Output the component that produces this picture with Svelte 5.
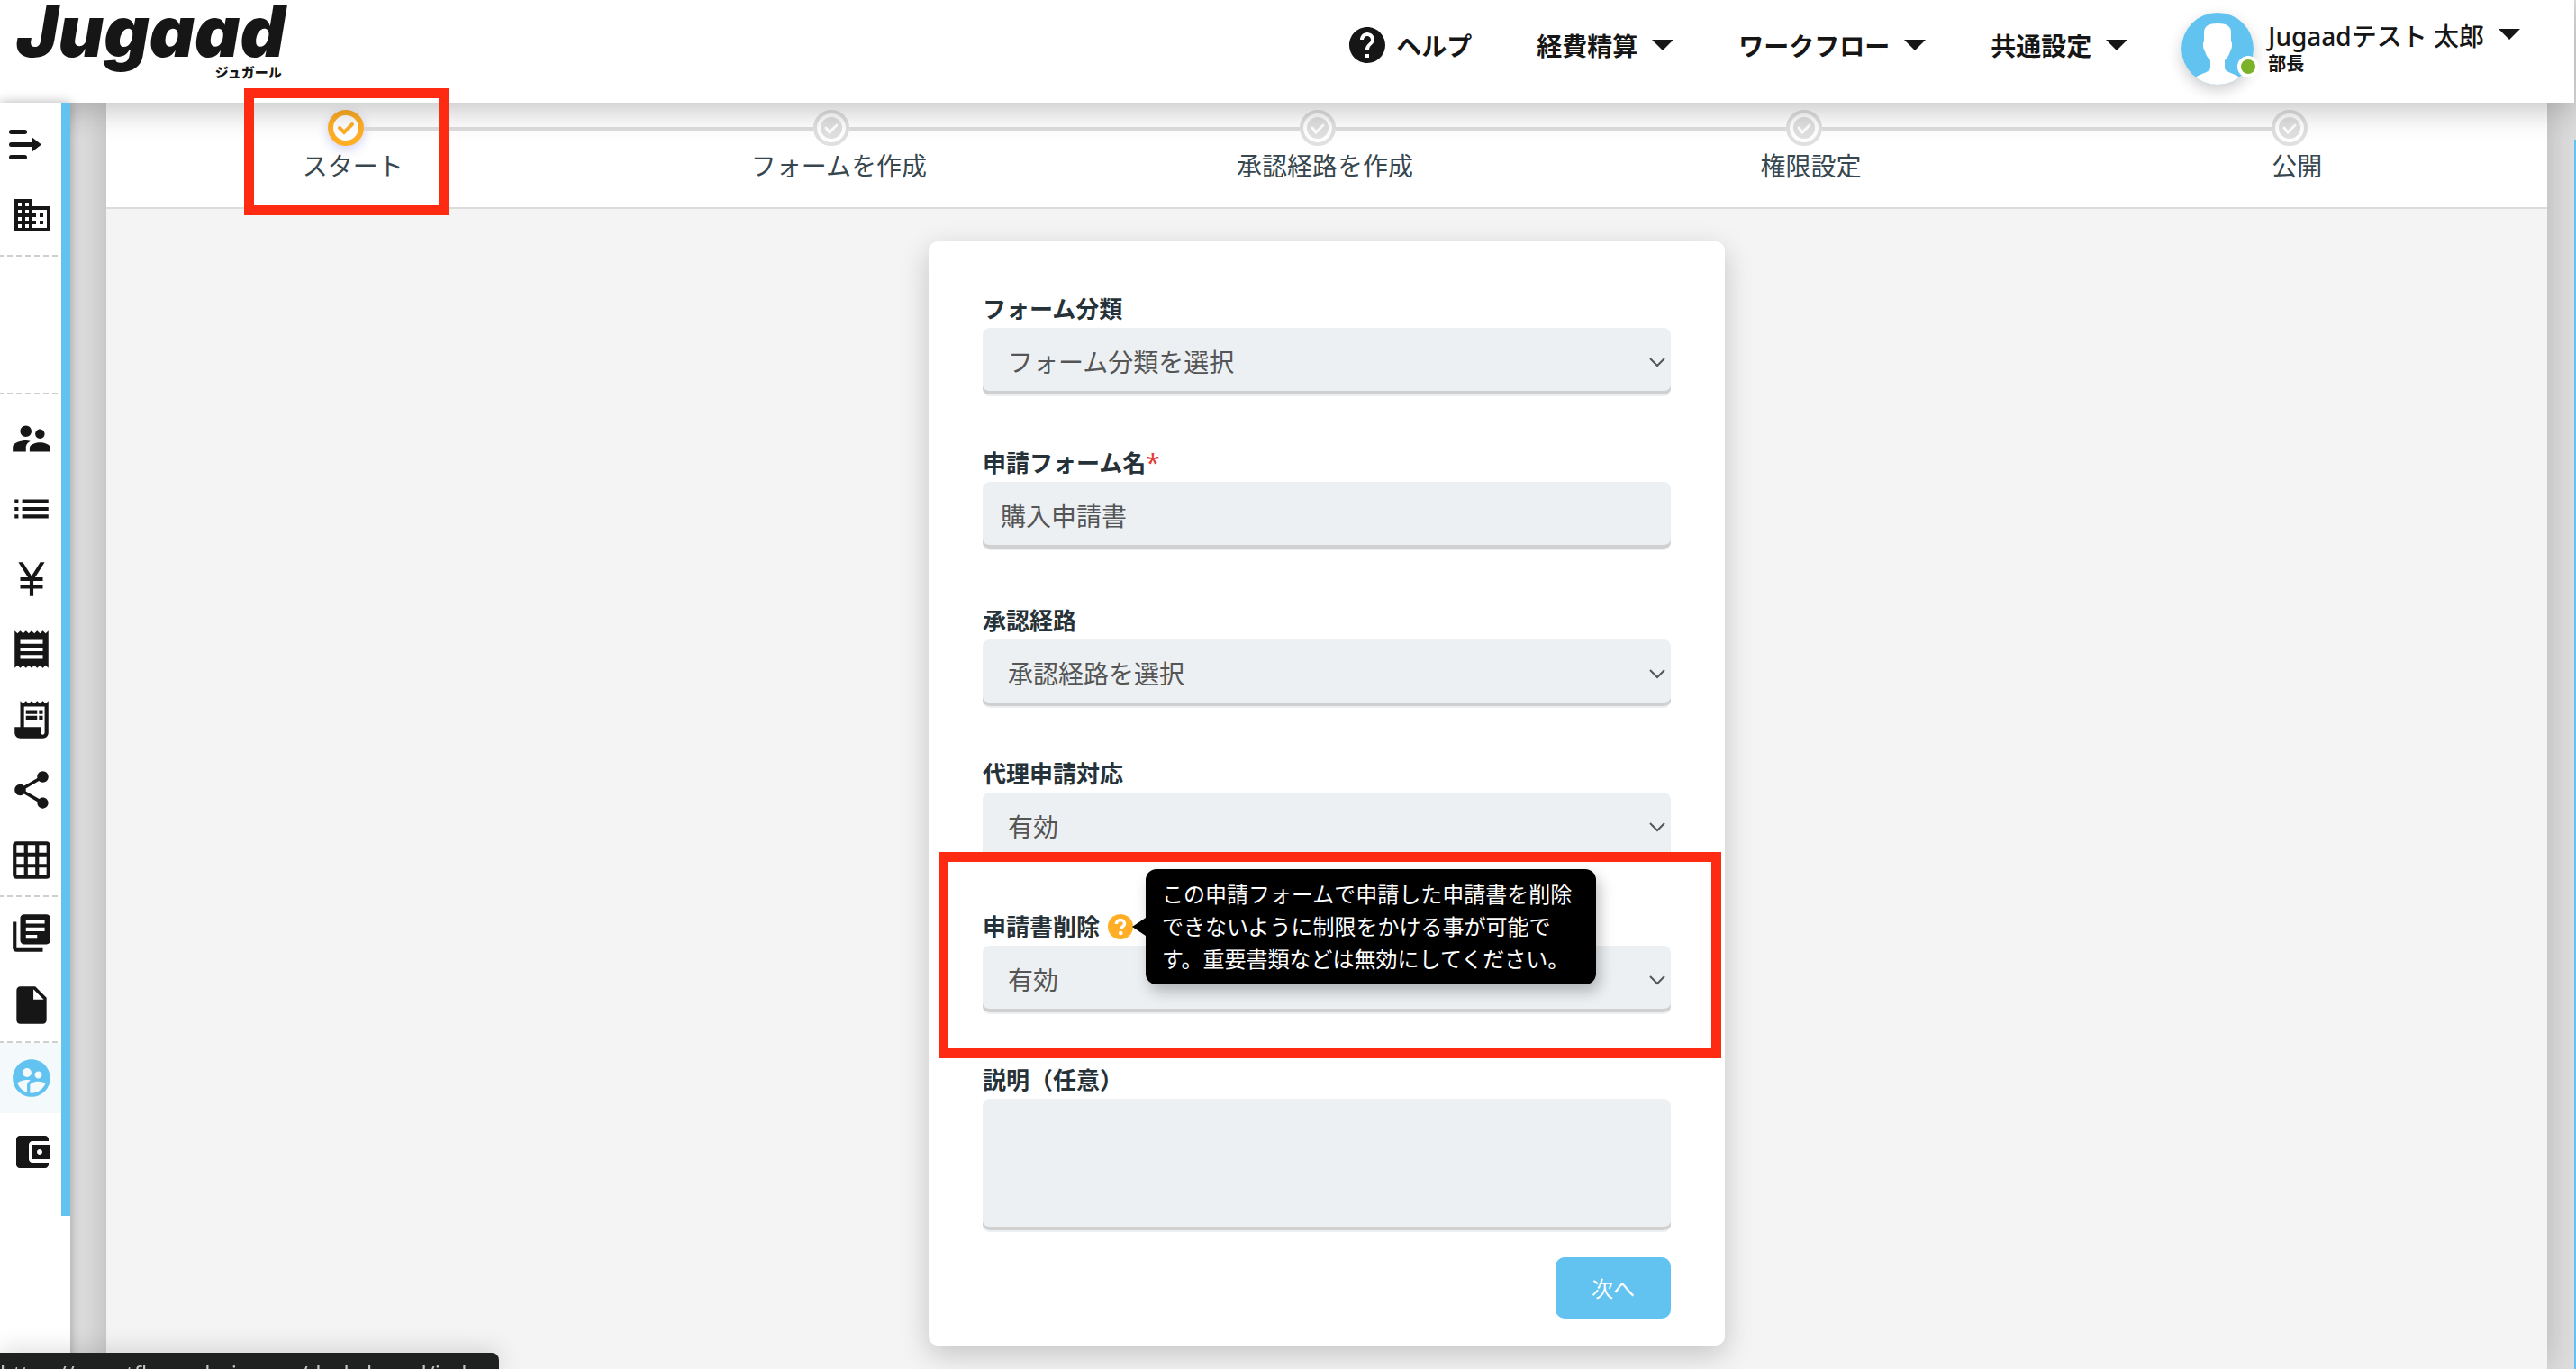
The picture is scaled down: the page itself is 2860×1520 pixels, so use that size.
<script lang="ts">
  interface Icon {
    label: string;
    path: string;
    size?: number;
    active?: boolean;
  }

  const menus = ['経費精算', 'ワークフロー', '共通設定'];
  const steps = ['スタート', 'フォームを作成', '承認経路を作成', '権限設定', '公開'];

  const company: Icon = {
    label: '会社',
    size: 48,
    path: 'M12 7V3H2v18h20V7H12zM6 19H4v-2h2v2zm0-4H4v-2h2v2zm0-4H4V9h2v2zm0-4H4V5h2v2zm4 12H8v-2h2v2zm0-4H8v-2h2v2zm0-4H8V9h2v2zm0-4H8V5h2v2zm10 12h-8v-2h2v-2h-2v-2h2v-2h-2V9h8v10zm-2-8h-2v2h2v-2zm0 4h-2v2h2v-2z',
  };

  const masters: Icon[] = [
    {
      label: 'ユーザー',
      path: 'M16.5 12c1.38 0 2.49-1.12 2.49-2.5S17.88 7 16.5 7C15.12 7 14 8.12 14 9.5s1.12 2.5 2.5 2.5zM9 11c1.66 0 2.99-1.34 2.99-3S10.66 5 9 5C7.34 5 6 6.34 6 8s1.34 3 3 3zm7.5 3c-1.83 0-5.5.92-5.5 2.75V19h11v-2.25c0-1.83-3.67-2.75-5.5-2.75zM9 13c-2.33 0-7 1.17-7 3.5V19h7v-2.25c0-.85.33-2.34 2.37-3.47C10.5 13.1 9.66 13 9 13z',
    },
    { label: '一覧', path: 'M3 13h2v-2H3v2zm0 4h2v-2H3v2zm0-8h2V7H3v2zm4 4h14v-2H7v2zm0 4h14v-2H7v2zM7 7v2h14V7H7z' },
    { label: '通貨', path: 'M13.92 11H18v2h-5v2h5v2h-5v4h-2v-4H6v-2h5v-2H6v-2h4.08L5 3h2.37L12 10.29 16.63 3H19l-5.08 8z' },
    {
      label: '領収書',
      path: 'M18 17H6v-2h12v2zm0-4H6v-2h12v2zm0-4H6V7h12v2zM3 22l1.5-1.5L6 22l1.5-1.5L9 22l1.5-1.5L12 22l1.5-1.5L15 22l1.5-1.5L18 22l1.5-1.5L21 22V2l-1.5 1.5L18 2l-1.5 1.5L15 2l-1.5 1.5L12 2l-1.5 1.5L9 2 7.5 3.5 6 2 4.5 3.5 3 2v20z',
    },
    {
      label: '明細',
      path: 'M19.5 3.5L18 2l-1.5 1.5L15 2l-1.5 1.5L12 2l-1.5 1.5L9 2 7.5 3.5 6 2v14H3v3c0 1.66 1.34 3 3 3h12c1.66 0 3-1.34 3-3V2l-1.5 1.5zM19 19c0 .55-.45 1-1 1s-1-.45-1-1v-3H8V5h11v14zM9 7h6v2H9zM16 7h2v2h-2zM9 10h6v2H9zM16 10h2v2h-2z',
    },
    {
      label: '共有',
      path: 'M18 16.08c-.76 0-1.44.3-1.96.77L8.91 12.7c.05-.23.09-.46.09-.7s-.04-.47-.09-.7l7.05-4.11c.54.5 1.25.81 2.04.81 1.66 0 3-1.34 3-3s-1.34-3-3-3-3 1.34-3 3c0 .24.04.47.09.7L8.04 9.81C7.5 9.31 6.79 9 6 9c-1.66 0-3 1.34-3 3s1.34 3 3 3c.79 0 1.5-.31 2.04-.81l7.12 4.16c-.05.21-.08.43-.08.65 0 1.61 1.31 2.92 2.92 2.92s2.92-1.31 2.92-2.92-1.31-2.92-2.92-2.92z',
    },
    {
      label: '表',
      path: 'M20 2H4c-1.1 0-2 .9-2 2v16c0 1.1.9 2 2 2h16c1.1 0 2-.9 2-2V4c0-1.1-.9-2-2-2zM8 20H4v-4h4v4zm0-6H4v-4h4v4zm0-6H4V4h4v4zm6 12h-4v-4h4v4zm0-6h-4v-4h4v4zm0-6h-4V4h4v4zm6 12h-4v-4h4v4zm0-6h-4v-4h4v4zm0-6h-4V4h4v4z',
    },
  ];

  const documents: Icon[] = [
    {
      label: '申請書',
      path: 'M4 6H2v14c0 1.1.9 2 2 2h14v-2H4V6zm16-4H8c-1.1 0-2 .9-2 2v12c0 1.1.9 2 2 2h12c1.1 0 2-.9 2-2V4c0-1.1-.9-2-2-2zm-1 9H9V9h10v2zm-4 4H9v-2h6v2zm4-8H9V5h10v2z',
    },
    { label: 'ファイル', path: 'M6 2c-1.1 0-1.99.9-1.99 2L4 20c0 1.1.89 2 1.99 2H18c1.1 0 2-.9 2-2V8l-6-6H6zm7 7V3.5L18.5 9H13z' },
  ];

  const flows: Icon[] = [
    {
      label: 'ワークフロー',
      active: true,
      path: 'M11.99 2c-5.52 0-10 4.48-10 10s4.48 10 10 10 10-4.48 10-10-4.48-10-10-10zm3.61 6.34c1.07 0 1.93.86 1.93 1.93 0 1.07-.86 1.93-1.93 1.93-1.07 0-1.93-.86-1.93-1.93-.01-1.07.86-1.93 1.93-1.93zm-6-1.58c1.3 0 2.36 1.06 2.36 2.36 0 1.3-1.06 2.36-2.36 2.36s-2.36-1.06-2.36-2.36c0-1.31 1.05-2.36 2.36-2.36zm0 9.13v3.75c-2.4-.75-4.3-2.6-5.14-4.96 1.05-1.12 3.67-1.69 5.14-1.69.53 0 1.2.08 1.9.22-1.64.87-1.9 2.02-1.9 2.68zM11.99 20c-.27 0-.53-.01-.79-.04v-4.07c0-1.42 2.94-2.13 4.4-2.13 1.07 0 2.92.39 3.84 1.15-1.17 2.97-4.06 5.09-7.45 5.09z',
    },
    {
      label: 'ウォレット',
      size: 48,
      path: 'M21 18v1c0 1.1-.9 2-2 2H5c-1.11 0-2-.9-2-2V5c0-1.1.89-2 2-2h14c1.1 0 2 .9 2 2v1h-9c-1.11 0-2 .9-2 2v8c0 1.1.89 2 2 2h9zm-9-2h10V8H12v8zm4-2.5c-.83 0-1.5-.67-1.5-1.5s.67-1.5 1.5-1.5 1.5.67 1.5 1.5-.67 1.5-1.5 1.5z',
    },
  ];

  let formName = $state('購入申請書');
</script>

{#snippet navIcon(icon: Icon)}
  <a class="nav-item" class:active={icon.active} class:offset={icon.size === 48} href="#top" aria-label={icon.label}>
    <svg width={icon.size ?? 50} height={icon.size ?? 50} viewBox="0 0 24 24" fill="currentColor">
      <path fill-rule="evenodd" d={icon.path} />
    </svg>
  </a>
{/snippet}

{#snippet caret()}
  <svg class="caret" width="24" height="12" viewBox="0 0 24 12" fill="currentColor"><path d="M0 0h24L12 12z" /></svg>
{/snippet}

{#snippet selectBox(id: string, value: string)}
  <div class="select-wrap">
    <select {id} class="control">
      <option>{value}</option>
    </select>
    <svg class="chevron" width="18" height="11" viewBox="0 0 18 11" fill="none" stroke="#555" stroke-width="2">
      <path d="M1 1l8 8 8-8" />
    </svg>
  </div>
{/snippet}

<div class="app">
  <div class="page">
    <header>
      <a class="logo" href="#top">
        <span class="logo-name">Jugaad</span>
        <span class="logo-kana">ジュガール</span>
      </a>
      <nav class="menus">
        <a class="menu help" href="#help">
          <svg width="48" height="48" viewBox="0 0 24 24" fill="currentColor">
            <path d="M12 2C6.48 2 2 6.48 2 12s4.48 10 10 10 10-4.48 10-10S17.52 2 12 2zm1 17h-2v-2h2v2zm2.07-7.75l-.9.92C13.45 12.9 13 13.5 13 15h-2v-.5c0-1.1.45-2.1 1.17-2.83l1.24-1.26c.37-.36.59-.86.59-1.41 0-1.1-.9-2-2-2s-2 .9-2 2H8c0-2.21 1.79-4 4-4s4 1.79 4 4c0 .88-.36 1.68-.93 2.25z" />
          </svg>
          ヘルプ
        </a>
        {#each menus as menu}
          <button class="menu">{menu}{@render caret()}</button>
        {/each}
      </nav>
      <button class="user">
        <span class="avatar">
          <svg width="80" height="80" viewBox="0 0 80 80">
            <clipPath id="face"><circle cx="40" cy="40" r="40" /></clipPath>
            <g clip-path="url(#face)">
              <rect width="80" height="80" fill="#62c3f0" />
              <path
                fill="#fff"
                d="M40 12c10 0 15 3 15 10v10c2 1 1 9-1 11-1 4-3 7-6 10v8c0 4 5 5 9 7 5 2 9 4 12 8v12H11V76c3-4 7-6 12-8 4-2 9-3 9-7v-8c-3-3-5-6-6-10-2-2-3-10-1-11V22c0-7 5-10 15-10z"
              />
            </g>
          </svg>
          <span class="online"></span>
        </span>
        <span class="who">
          <span class="name">Jugaadテスト 太郎{@render caret()}</span>
          <span class="role">部長</span>
        </span>
      </button>
    </header>

    <div class="body">
      <aside>
        <nav class="side">
          <div class="group top">
            <button class="nav-item toggle" aria-label="メニューを開く">
              <svg width="36" height="34" viewBox="0 0 36 34" fill="#161616">
                <rect width="20" height="5" y="0" rx="2.5" />
                <rect width="28" height="5" y="14" rx="2.5" />
                <rect width="20" height="5" y="28" rx="2.5" />
                <path d="M25 8l11 8.5L25 25z" />
              </svg>
            </button>
            {@render navIcon(company)}
          </div>
          <div class="group blank"></div>
          <div class="group masters">
            {#each masters as icon}{@render navIcon(icon)}{/each}
          </div>
          <div class="group documents">
            {#each documents as icon}{@render navIcon(icon)}{/each}
          </div>
          <div class="group flows">
            {#each flows as icon}{@render navIcon(icon)}{/each}
          </div>
        </nav>
      </aside>

      <main>
        <ol class="stepper">
          {#each steps as step, i}
            <li class:current={i === 0}>
              <span class="marker">
                <svg width="40" height="40" viewBox="0 0 40 40" fill="none">
                  {#if i === 0}
                    <circle cx="20" cy="20" r="17" fill="#fff" stroke="#ffae26" stroke-width="6" />
                    <path d="M13 20l5 5 9-9" stroke="#ffae26" stroke-width="4" stroke-linecap="round" />
                  {:else}
                    <circle cx="20" cy="20" r="18" fill="#fff" stroke="#e0e0e0" stroke-width="4" />
                    <circle cx="20" cy="20" r="12" fill="#e0e0e0" />
                    <path d="M14 20l4 5 8-8" stroke="#fff" stroke-width="3" stroke-linecap="round" />
                  {/if}
                </svg>
                {#if i === 0}<span class="highlight step-highlight"></span>{/if}
              </span>
              <span class="step-label">{step}</span>
            </li>
          {/each}
        </ol>

        <form class="card">
          <div class="field">
            <label for="category">フォーム分類</label>
            {@render selectBox('category', 'フォーム分類を選択')}
          </div>
          <div class="field spaced">
            <label for="form-name">申請フォーム名<span class="required">*</span></label>
            <input id="form-name" class="control" type="text" bind:value={formName} />
          </div>
          <div class="field">
            <label for="route">承認経路</label>
            {@render selectBox('route', '承認経路を選択')}
          </div>
          <div class="field">
            <label for="proxy">代理申請対応</label>
            {@render selectBox('proxy', '有効')}
          </div>
          <div class="field">
            <div class="label-row">
              <label for="deletion">申請書削除</label>
              <span class="hint">
                <svg width="28" height="28" viewBox="0 0 28 28" fill="none">
                  <circle cx="14" cy="14" r="14" fill="#ffae26" />
                  <path d="M9.5 11c0-2.5 2-4.5 4.5-4.5s4.5 1.8 4.5 4.2c0 3-4 3.300-4 6" stroke="#fff" stroke-width="3.5" />
                  <circle cx="14.3" cy="21" r="2.3" fill="#fff" />
                </svg>
                <span class="tooltip" role="tooltip">この申請フォームで申請した申請書を削除できないように制限をかける事が可能です。重要書類などは無効にしてください。</span>
              </span>
            </div>
            {@render selectBox('deletion', '有効')}
            <span class="highlight field-highlight"></span>
          </div>
          <div class="field">
            <label for="note">説明（任意）</label>
            <textarea id="note" class="control"></textarea>
          </div>
          <div class="actions">
            <button type="button" class="next">次へ</button>
          </div>
        </form>
      </main>
    </div>
  </div>
  <div class="rail"></div>
  <div class="status">https://smartflow.vebuin.com/dash_board/index</div>
</div>

<style>
  :global(body) {
    margin: 0;
    background: #dfdfdf;
  }
  .app,
  .app * {
    box-sizing: border-box;
  }
  .app {
    display: flex;
    min-height: 100vh;
    font-family: 'Noto Sans', 'Noto Sans CJK JP', sans-serif;
    font-size: 28px;
    color: #161616;
  }
  button,
  input,
  select,
  textarea {
    font: inherit;
    color: inherit;
  }
  button {
    padding: 0;
    border: 0;
    background: none;
    cursor: pointer;
  }
  a {
    color: inherit;
    text-decoration: none;
  }
  svg {
    display: block;
    flex: none;
  }
  .page {
    flex: 1;
    min-width: 0;
    display: flex;
    flex-direction: column;
  }
  .rail {
    width: 2px;
    margin-top: 155px;
    background: #62c3f0;
  }

  /* header */
  header {
    position: relative;
    z-index: 10;
    display: flex;
    align-items: flex-start;
    height: 114px;
    padding: 0 60px 0 18px;
    background: #fff;
    box-shadow: 0 8px 32px rgba(0, 0, 0, 0.24);
  }
  .logo {
    display: flex;
    flex-direction: column;
    margin-right: auto;
  }
  .logo-name {
    font: italic 900 78px/70px Inter, sans-serif;
  }
  .logo-kana {
    align-self: flex-end;
    margin-right: 4px;
    font-size: 15px;
    font-weight: 900;
    line-height: 20px;
  }
  .menus {
    display: flex;
    gap: 72px;
    height: 100px;
  }
  .menu {
    display: flex;
    align-items: center;
    gap: 16px;
    font-weight: 700;
    white-space: nowrap;
  }
  .help {
    gap: 8px;
  }
  .user {
    display: flex;
    gap: 16px;
    margin: 14px 0 0 60px;
    text-align: left;
  }
  .avatar {
    position: relative;
    border-radius: 50%;
    box-shadow: 0 6px 16px rgba(0, 0, 0, 0.2);
  }
  .online {
    position: absolute;
    right: -6px;
    bottom: 8px;
    width: 24px;
    height: 24px;
    border: 4px solid #fff;
    border-radius: 50%;
    background: #7cb22a;
  }
  .who {
    display: flex;
    flex-direction: column;
    padding-top: 8px;
  }
  .name {
    display: flex;
    gap: 16px;
    font-weight: 500;
    line-height: 36px;
    white-space: nowrap;
  }
  .name .caret {
    margin-top: 10px;
  }
  .role {
    font-size: 20px;
    font-weight: 700;
    line-height: 26px;
  }

  /* sidebar */
  .body {
    flex: 1;
    display: flex;
  }
  aside {
    position: relative;
    z-index: 11;
    flex: none;
    width: 78px;
    margin-right: 40px;
    background: #fff;
    box-shadow: 0 0 12px rgba(0, 0, 0, 0.3);
  }
  .side {
    padding-bottom: 32px;
    border-right: 10px solid #62c3f0;
  }
  .group + .group::before {
    content: '';
    display: block;
    width: 65px;
    height: 2px;
    background: repeating-linear-gradient(90deg, #cfcfcf 0 4px, transparent 4px 8px, #cfcfcf 8px 10px);
  }
  .top {
    padding: 8px 0 5px;
  }
  .blank {
    height: 153px;
  }
  .masters::before {
    margin-bottom: 10px;
  }
  .nav-item {
    display: flex;
    align-items: center;
    justify-content: center;
    width: 68px;
    height: 78px;
    padding-left: 2px;
  }
  .nav-item.offset {
    padding-left: 4px;
  }
  .nav-item.toggle {
    justify-content: flex-start;
    padding-left: 10px;
  }
  .nav-item.active {
    color: #62c3f0;
    background: #f4f9fb;
  }
  .documents .nav-item {
    height: 80px;
  }
  .flows {
    display: flex;
    flex-direction: column;
  }
  .flows .offset {
    margin-top: 4px;
  }

  /* main column */
  main {
    flex: 1;
    min-width: 0;
    margin-right: 30px;
    padding-bottom: 24px;
    background: #f4f4f4;
    box-shadow: 0 0 40px rgba(0, 0, 0, 0.2);
  }
  .stepper {
    display: flex;
    height: 118px;
    margin: 0;
    padding: 8px 8px 0 4px;
    list-style: none;
    background: #fff;
    border-bottom: 2px solid #dcdcdc;
  }
  .stepper li {
    position: relative;
    flex: 1;
    display: flex;
    flex-direction: column;
    align-items: center;
  }
  .stepper li:not(:last-child)::after {
    content: '';
    position: absolute;
    top: 19px;
    left: calc(50% + 12px);
    width: calc(100% - 40px);
    height: 4px;
    background: #dedede;
  }
  .marker {
    position: relative;
    width: 40px;
    height: 40px;
    margin-right: 16px;
    border-radius: 50%;
  }
  .current .marker {
    box-shadow: 0 4px 12px rgba(60, 70, 220, 0.25);
  }
  .step-label {
    line-height: 44px;
    color: #37474f;
    white-space: nowrap;
  }
  .highlight {
    position: absolute;
    z-index: 20;
    border: 11px solid #ff2a12;
    pointer-events: none;
  }
  .step-highlight {
    inset: -24px -94px -77px -93px;
  }
  .field-highlight {
    inset: -64px -56px -49px -49px;
  }

  /* form */
  .card {
    display: flex;
    flex-direction: column;
    gap: 54px;
    width: 884px;
    margin: 36px auto 0;
    padding: 56px 60px 30px;
    border-radius: 10px;
    background: #fff;
    box-shadow: 0 10px 32px rgba(0, 0, 0, 0.2);
  }
  .field {
    position: relative;
    display: flex;
    flex-direction: column;
  }
  .field.spaced {
    margin-bottom: 5px;
  }
  .field label {
    padding-bottom: 2px;
    font-size: 26px;
    font-weight: 700;
    line-height: 38px;
    color: #263238;
  }
  .required {
    font-size: 28px;
    font-weight: 400;
    color: #e53935;
  }
  .control {
    display: block;
    width: 100%;
    height: 76px;
    margin: 0;
    padding: 0 20px;
    border: 0;
    border-bottom: 2px solid #ecf0f3;
    border-radius: 8px;
    outline: 0;
    color: #555;
    background: #ecf0f3;
    box-shadow: inset 0 -4px #d0d0d0;
  }
  select.control {
    appearance: none;
    padding: 2px 28px 0;
  }
  textarea.control {
    height: 148px;
    resize: none;
  }
  .select-wrap {
    position: relative;
  }
  .chevron {
    position: absolute;
    top: 33px;
    right: 6px;
    pointer-events: none;
  }
  .label-row {
    display: flex;
    align-items: center;
    gap: 9px;
  }
  .hint {
    position: relative;
    margin-bottom: 2px;
  }
  .tooltip {
    position: absolute;
    z-index: 5;
    top: 50%;
    left: calc(100% + 14px);
    width: 500px;
    margin-top: -64px;
    padding: 10px 18px;
    border-radius: 12px;
    font-size: 24px;
    line-height: 36px;
    color: #fff;
    background: #000;
    box-shadow: 4px 8px 16px rgba(0, 0, 0, 0.25);
  }
  .tooltip::before {
    content: '';
    position: absolute;
    top: 54px;
    right: 100%;
    border: 10px solid transparent;
    border-right: 15px solid #000;
    border-left: 0;
  }
  .actions {
    display: flex;
    justify-content: flex-end;
    margin-top: -26px;
  }
  .next {
    width: 128px;
    height: 68px;
    padding-bottom: 2px;
    border-radius: 10px;
    font-size: 24px;
    color: #fff;
    background: #62c3f0;
  }

  /* link preview at the bottom edge of the window */
  .status {
    position: fixed;
    z-index: 30;
    bottom: 0;
    left: 0;
    height: 18px;
    padding: 6px 10px 0 0;
    overflow: hidden;
    border-top-right-radius: 8px;
    font-size: 24px;
    line-height: 34px;
    color: #c4c4c4;
    background: #1f2120;
    box-shadow: 0 0 28px rgba(0, 0, 0, 0.2);
  }
</style>
